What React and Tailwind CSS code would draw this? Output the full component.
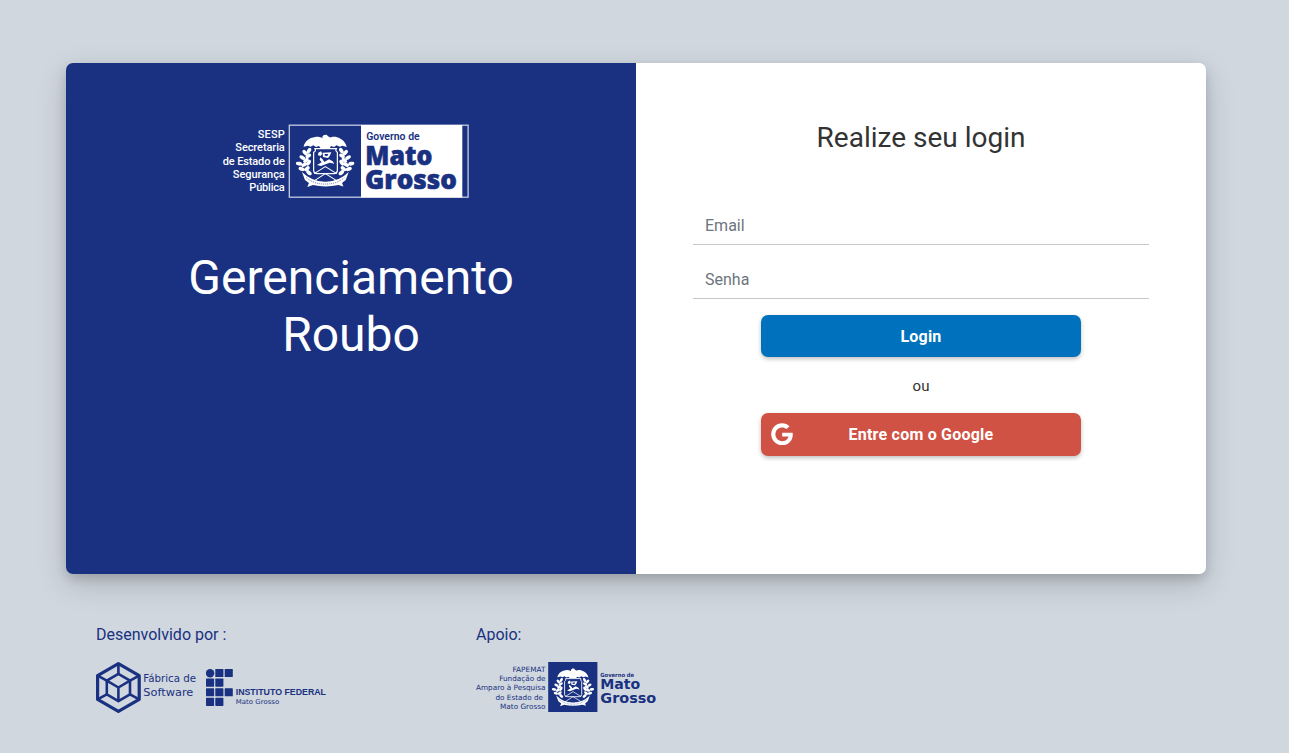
const NAVY = "#193180";

function Leaves({ points }) {
  return points.map(([x, y, r], i) => (
    <ellipse key={i} cx={x} cy={y} rx="9.5" ry="5.6" transform={`rotate(${r} ${x} ${y})`} />
  ));
}

const LEFT_LEAVES = [
  [72, 92, -60], [60, 98, 50], [70, 108, -30], [52, 113, 30], [63, 121, -40],
  [42, 131, 10], [58, 134, -25], [71, 128, -60], [50, 147, 20], [66, 146, -40], [72, 158, 40],
];

function Crest({ x, y, size }) {
  return (
    <svg x={x} y={y} width={size} height={size} viewBox="32 32 176 176" fill="#fff" stroke="none">
      <path d="M56 80C59 65 72 53 91 51C100 50 107 52 113 55L112 51C114 43 127 42 129 49L136 53L130 55C137 51 147 49 156 52C171 56 182 67 185 81L172 77L164 80L155 76L147 81L138 78L134 85H107L102 78L93 81L85 76L77 80L69 77Z" />
      <Leaves points={LEFT_LEAVES} />
      <g transform="translate(241 0) scale(-1 1)">
        <Leaves points={LEFT_LEAVES} />
      </g>
      <path d="M90 86H154Q150 93 157 97V152Q156 161 147 161H97Q87 161 86 152V97Q94 93 90 86Z" fill={NAVY} stroke="#fff" strokeWidth="3.6" />
      <path d="M100 98L108 94L112 101L107 108L99 106Z" />
      <path d="M113 98L139 97L134 108L129 114L114 111Z" />
      <path d="M106 112L113 118L118 126L132 118L143 124L148 131L134 128L122 133L108 138L96 135L110 127L104 119Z" />
      <path d="M119 102L130 102L127 108L119 107Z" fill={NAVY} />
      <path d="M88 161L121 140L155 161M76 190L121 161L168 190" fill="none" stroke="#fff" strokeWidth="3" />
      <path d="M51 156Q82 186 121 185Q160 186 191 156L182 180L171 189L175 199L160 195Q121 203 84 195L67 201L72 189L60 180Z" />
      <path d="M64 173Q88 193 121 192Q153 193 178 173" fill="none" stroke={NAVY} strokeWidth="2" strokeDasharray="3 3" />
    </svg>
  );
}

function SespLogo() {
  const lines = [
    ["SESP", 138, 27], ["Secretaria", 151.4, 49.5], ["de Estado de", 164.6, 62],
    ["Segurança", 178, 52], ["Pública", 191, 35.5],
  ];
  return (
    <svg className="h-[74px] w-[248px]" viewBox="221 124 248 74">
      <g fill="#fff" fontFamily="Roboto, sans-serif" fontSize="11" fontWeight="500" textAnchor="end">
        {lines.map(([t, y, w]) => (
          <text key={t} x="284.8" y={y} textLength={w}>{t}</text>
        ))}
      </g>
      <rect x="289.3" y="125.2" width="178.8" height="72" fill={NAVY} stroke="#c6cde2" strokeWidth="1.3" />
      <rect x="361" y="125" width="101.3" height="72.5" fill="#fff" />
      <Crest x="295.6" y="130.6" size="58.8" />
      <g fill={NAVY}>
        <text x="366.2" y="140.4" fontFamily="Roboto, sans-serif" fontSize="10.5" fontWeight="600" textLength="53.5" lengthAdjust="spacingAndGlyphs">Governo de</text>
        <g fontFamily="'Open Sans', sans-serif" fontSize="26.5" fontWeight="800" stroke={NAVY} strokeWidth="0.6">
          <text x="365.3" y="164.6" textLength="67" lengthAdjust="spacingAndGlyphs">Mato</text>
          <text x="365" y="188.6" textLength="92" lengthAdjust="spacingAndGlyphs">Grosso</text>
        </g>
      </g>
    </svg>
  );
}

function FabricaLogo() {
  return (
    <svg className="h-[51px] w-[101px] overflow-visible" viewBox="96 662 101 51">
      <g fill="none" stroke={NAVY} strokeWidth="3.2" strokeLinejoin="round">
        <path d="M118.4 663.6L139.2 675.6V699.4L118.4 711.4L97.6 699.4V675.6Z" />
        <path d="M118.4 673.8L130 680.6V694.4L118.4 701.2L106.8 694.4V680.6Z" strokeWidth="2.6" />
        <path d="M106.8 680.6L118.4 687.5L130 680.6M118.4 687.5V701.2M118.4 663.6V673.8M97.6 675.6L106.8 680.6M139.2 675.6L130 680.6M97.6 699.4L106.8 694.4M139.2 699.4L130 694.4" strokeWidth="2.6" />
      </g>
      <g fill={NAVY} fontFamily="'DejaVu Sans', sans-serif" fontSize="10.8">
        <text x="143.3" y="682.4" textLength="52.8" lengthAdjust="spacingAndGlyphs">Fábrica de</text>
        <text x="143.3" y="695.8" textLength="50" lengthAdjust="spacingAndGlyphs">Software</text>
      </g>
    </svg>
  );
}

const IF_SQUARES = [
  [215.3, 669], [224.7, 669], [206, 678.6], [215.3, 678.6],
  [206, 688.2], [215.3, 688.2], [224.7, 688.2], [206, 697.8], [215.3, 697.8],
];

function InstitutoLogo() {
  return (
    <svg className="h-[51px] w-[121px]" viewBox="206 662 121 51">
      <g fill={NAVY}>
        <circle cx="210.1" cy="673.2" r="4.2" />
        {IF_SQUARES.map(([x, y]) => (
          <rect key={`${x}-${y}`} x={x} y={y} width="8.1" height="8.1" rx="0.6" />
        ))}
        <text x="235.7" y="695" fontFamily="'Liberation Sans', sans-serif" fontSize="8.7" fontWeight="700" textLength="90.3" lengthAdjust="spacingAndGlyphs">INSTITUTO FEDERAL</text>
        <text x="235.8" y="703.5" fontFamily="'DejaVu Sans', sans-serif" fontSize="6.7" textLength="43.4" lengthAdjust="spacingAndGlyphs">Mato Grosso</text>
      </g>
    </svg>
  );
}

function FapematLogo() {
  const lines = [
    ["FAPEMAT", 671.8, 545.5, 33], ["Fundação de", 681.2, 545.5, 46.3],
    ["Amparo à Pesquisa", 690.4, 545.5, 69.5], ["do Estado de", 699.7, 543, 47.5],
    ["Mato Grosso", 708.8, 545.5, 45.5],
  ];
  return (
    <svg className="h-[50px] w-[182px]" viewBox="476 662 182 50">
      <g fill={NAVY} fontFamily="'DejaVu Sans', sans-serif" fontSize="7.3" textAnchor="end">
        {lines.map(([t, y, x, w]) => (
          <text key={t} x={x} y={y} textLength={w} lengthAdjust="spacingAndGlyphs">{t}</text>
        ))}
      </g>
      <rect x="548.2" y="662" width="49.2" height="50" fill={NAVY} />
      <Crest x="551.6" y="665.6" size="42.4" />
      <g fill={NAVY} fontFamily="'DejaVu Sans', sans-serif" fontWeight="700">
        <text x="600.3" y="676.6" fontSize="5.6" textLength="33.8" lengthAdjust="spacingAndGlyphs">Governo de</text>
        <text x="600.3" y="689" fontSize="14.4" textLength="40" lengthAdjust="spacingAndGlyphs">Mato</text>
        <text x="600.3" y="703" fontSize="14.4" textLength="56" lengthAdjust="spacingAndGlyphs">Grosso</text>
      </g>
    </svg>
  );
}

function Field({ label, type }) {
  return (
    <input
      type={type}
      placeholder={label}
      className="block h-[38px] w-full border-b border-[#c8c8c8] bg-white px-3 text-base text-[#495057] outline-none placeholder:text-[#6c757d]"
    />
  );
}

export default function App() {
  return (
    <div className="min-h-[753px] w-full overflow-hidden bg-[#d0d7df] font-[Roboto,sans-serif] text-[#333]">
      <main className="mt-[63px] ml-[66px] flex h-[511px] w-[1140px] overflow-hidden rounded-[7px] shadow-[0_10px_30px_0_rgba(0,0,0,0.17),0_5px_12px_-1px_rgba(0,0,0,0.16)]">
        <section className="flex w-1/2 flex-col items-center bg-[#193180] pt-[61px] text-white">
          <div className="pr-3"><SespLogo /></div>
          <h1 className="mt-[51px] text-center text-[48px] leading-[57px]">Gerenciamento<br />Roubo</h1>
        </section>
        <section className="flex w-1/2 flex-col items-center bg-white px-[57px] pt-[58px]">
          <h2 className="text-[28px] leading-[34px]">Realize seu login</h2>
          <form className="mt-[52px] flex w-full flex-col gap-4">
            <Field label="Email" type="email" />
            <Field label="Senha" type="password" />
          </form>
          <button className="mt-4 h-[42px] w-[320px] rounded-[7px] bg-[#0071bc] pt-px text-base font-bold tracking-[0.2px] text-white shadow-[0_2px_4px_rgba(0,0,0,0.25)]">Login</button>
          <p className="mt-[17px] text-[15px] leading-6">ou</p>
          <button className="mt-[15px] grid h-[43px] w-[320px] grid-cols-[42px_1fr_42px] items-center rounded-[7px] bg-[#d05244] text-base font-bold text-white shadow-[0_2px_4px_rgba(0,0,0,0.25)]">
            <svg className="mb-px ml-[10px] h-[22.6px] w-[22px]" viewBox="0 0 488 512" fill="currentColor">
              <path d="M488 261.8C488 403.3 391.1 504 248 504 110.8 504 0 393.2 0 256S110.8 8 248 8c66.8 0 123 24.5 166.3 64.9l-67.5 64.9C258.5 52.6 94.3 116.6 94.3 256c0 86.5 69.1 156.6 153.7 156.6 98.2 0 135-70.4 140.8-106.9H248v-85.3h236.1c2.3 12.7 3.9 24.9 3.9 41.4z" />
            </svg>
            <span className="tracking-[0.22px]">Entre com o Google</span>
          </button>
        </section>
      </main>
      <footer className="mt-[49px] ml-24 flex text-base text-[#193180]">
        <section className="w-[380px]">
          <p>Desenvolvido por :</p>
          <div className="mt-[15px] flex gap-[9px]"><FabricaLogo /><InstitutoLogo /></div>
        </section>
        <section>
          <p>Apoio:</p>
          <div className="mt-[15px]"><FapematLogo /></div>
        </section>
      </footer>
    </div>
  );
}
